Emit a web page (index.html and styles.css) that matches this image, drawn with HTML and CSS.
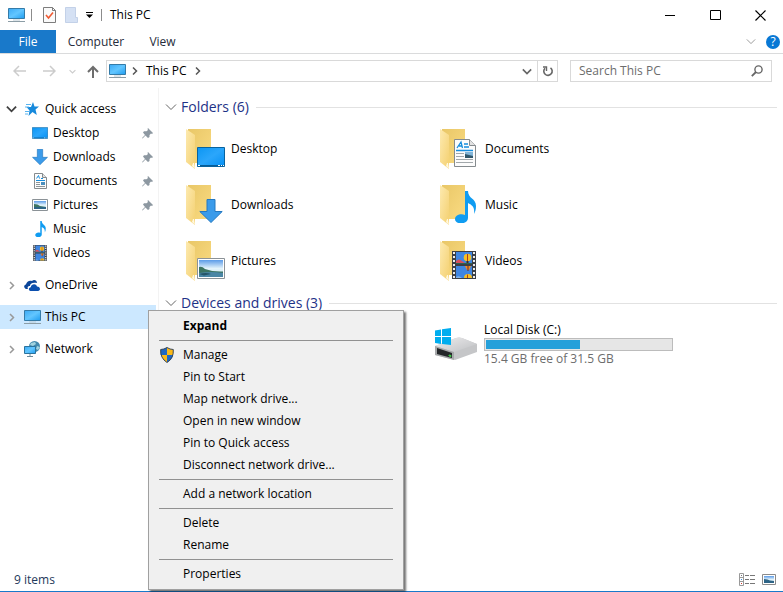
FILE: index.html
```html
<!DOCTYPE html>
<html lang="en">
<head>
<meta charset="utf-8">
<title>This PC</title>
<link rel="stylesheet" href="styles.css">
</head>
<body>
<svg class="defs" aria-hidden="true">
  <defs>
    <linearGradient id="sky" x1="0" y1="0" x2="1" y2="1"><stop offset="0" stop-color="#3aa9f5"/><stop offset=".5" stop-color="#62c6ff"/><stop offset="1" stop-color="#1e9cf0"/></linearGradient>
    <linearGradient id="desk" x1="0" y1="0" x2="1" y2="1"><stop offset="0" stop-color="#0c96f3"/><stop offset=".5" stop-color="#2ba6fb"/><stop offset="1" stop-color="#0590f4"/></linearGradient>
    <linearGradient id="back" x1="0" y1="0" x2="1" y2="1"><stop offset="0" stop-color="#e9c767"/><stop offset="1" stop-color="#fadb82"/></linearGradient>
    <linearGradient id="flap" x1="0" y1="0" x2="1" y2="1"><stop offset="0" stop-color="#fdeab0"/><stop offset="1" stop-color="#f4d070"/></linearGradient>
    <linearGradient id="view" x1="0" y1="0" x2="0" y2="1"><stop offset="0" stop-color="#5b9be8"/><stop offset=".5" stop-color="#e3f3fb"/><stop offset="1" stop-color="#c2dfe9"/></linearGradient>
    <linearGradient id="metal" x1="0" y1="0" x2="1" y2="1"><stop offset="0" stop-color="#ededee"/><stop offset="1" stop-color="#bfc0c3"/></linearGradient>
    <symbol id="monitor" viewBox="0 0 17 16"><path d="M.5 1.5h16v10H.5z" fill="url(#sky)" stroke="#347ba8"/><path d="M5 13h7" stroke="#b9cad3"/><path d="M0 14.500h17" stroke="#8c9da6"/></symbol>
    <symbol id="desktop" viewBox="0 0 28 20"><path d="M.5.5h27v19H.5z" fill="url(#desk)" stroke="#08639f"/><path d="M1 18.5h26" stroke="#075c97"/><path d="M1 18.5h2M21 18.5h2m1 0h1m1 0h1" stroke="#fff"/></symbol>
    <symbol id="down" viewBox="0 0 24 24"><path d="M8 .5h8v12h7.2L12 23.5.8 12.500H8z" fill="#3b9bea" stroke="#2478c0"/></symbol>
    <symbol id="document" viewBox="0 0 22 28"><path d="M.5.5h15l6 6v21H.5z" fill="#fcfcfc" stroke="#858b8e"/><path d="M15.500.5v6h6" fill="#e2e2e2" stroke="#858b8e"/><path d="M3 9l4-6 1.500 6M5 7h3M10 5h4M10 8h5M2 11.500h17" fill="none" stroke="#158ddd" stroke-width="1.300"/><path d="M2 14.500h8M2 17.500h8M2 20.500h17M2 23.500h17" stroke="#a2a8ab"/><path d="M11 13h8v6h-8z" fill="#82b5d8"/><path d="M11 15l8 2v2h-8z" fill="#31576b"/></symbol>
    <symbol id="document-small" viewBox="0 0 13 16"><path d="M.5.5h8l4 4v11H.5z" fill="#fcfcfc" stroke="#858b8e"/><path d="M8.500.5v4h4" fill="#e2e2e2" stroke="#858b8e"/><path d="M2.500 5.500L4.500 2.500l1 3M2 7.500h9M7 5.500h2" fill="none" stroke="#158ddd"/><path d="M2 9.500h4M2 11.500h4M2 13.500h9" stroke="#8d9599"/><path d="M7 9h4v3H7z" fill="#4b8fbd"/></symbol>
    <symbol id="picture" viewBox="0 0 28 21"><path d="M.5.5h27v20H.5z" fill="#fff" stroke="#8b9297"/><path d="M2 2h24v17H2z" fill="url(#view)"/><path d="M2 9q3-1 6 2 8 3 18 2.500v1.500H2z" fill="#3d7462"/><path d="M2 15q12-2 24 0v4H2z" fill="#4a86a5"/><path d="M2 16q7-2 12 0l-7 1.500z" fill="#255568"/></symbol>
    <symbol id="picture-small" viewBox="0 0 16 12"><path d="M.5.5h15v11H.5z" fill="#fff" stroke="#8b9297"/><path d="M2 2h12v8H2z" fill="url(#view)"/><path d="M2 5q4 0 6 2l6 1v1H2z" fill="#3d7462"/><path d="M2 8h12v2H2z" fill="#2d6486"/></symbol>
    <symbol id="note" viewBox="0 0 21 32"><path d="M10 0h3c0 8 8 7 8 15 0 4-1 6-2 8 1-7-2-9-6-11v15c0 7-13 7-13 1 0-4 6-6 10-4z" fill="#109cf1"/></symbol>
    <symbol id="film" viewBox="0 0 24 28"><path d="M0 0h24v28H0z" fill="#3b3f45"/><path d="M4 1h16v12H4zM4 15h16v12H4z" fill="#3f86e2"/><path d="M2 1v27M22 1v27" stroke="#eee" stroke-width="2" stroke-dasharray="2 2"/><path d="M4 10q3-3 6 0l3 2H4z" fill="#d8505c"/><path d="M4 12h16v1H4z" fill="#2d6450"/><circle cx="15.500" cy="6.500" r="3.800" fill="#f7c022"/><path d="M15.500 3v7" stroke="#a93a22"/><path d="M14.500 10h2v2h-2z" fill="#442b20"/><path d="M13 15h6l-2 4h-2z" fill="#f08a25"/><path d="M16 15v5" stroke="#6d2a28"/><path d="M12 27q0-4 4-4t4 4z" fill="#f7c022"/><path d="M15.500 23.500V27" stroke="#a93a22"/><path d="M4 26q3-2 6 1H4z" fill="#7fb3ee"/></symbol>
    <symbol id="folder" viewBox="0 0 26 41"><path d="M2 0h23v34H2z" fill="url(#back)"/><path d="M0 0l9 6v34L0 33z" fill="url(#flap)"/><path d="M7 34h1l1 6-3-3z" fill="#fff8df"/></symbol>
    <symbol id="pin" viewBox="0 0 11 11"><path d="M6 0l5 5-1 1-1-.5L7.500 7v2L6 10 3.500 7.500.5 10.500 0 10l3-3L1 4.500 2 3.200l2.500.1L6 2l-.5-1z" fill="#8d98a1"/></symbol>
    <symbol id="right" viewBox="0 0 6 8"><path d="M1 .5L4.500 4 1 7.500" fill="none" stroke="currentColor" stroke-width="1.500"/></symbol>
    <symbol id="chevron" viewBox="0 0 12 8"><path d="M1 1.500l5 5 5-5" fill="none" stroke="currentColor" stroke-width="var(--w,1)"/></symbol>
    <symbol id="arrow" viewBox="0 0 13 12"><path d="M0 6h12M7 1l5 5-5 5" fill="none" stroke="currentColor" stroke-width="1.500"/></symbol>
  </defs>
</svg>

<div class="window">
  <header class="titlebar">
    <svg class="i-monitor"><use href="#monitor"/></svg>
    <span class="divider"></span>
    <button class="quick" aria-label="Item properties"><svg width="13" height="16"><path d="M.5.500h9l3 3v12H.5z" fill="#fafafa" stroke="#7d7d7d"/><path d="M9.500.5v3h3" fill="none" stroke="#7d7d7d"/><path d="M3 8l2.500 3L10 5.500" fill="none" stroke="#ef5a33" stroke-width="1.600"/></svg></button>
    <button class="quick" aria-label="New folder"><svg width="13" height="16"><path d="M.5.5h10v10h2v5H.5z" fill="#d5e1f4" stroke="#c3d1e8"/></svg></button>
    <button class="quick" aria-label="Customize toolbar"><svg width="7" height="6"><path d="M0 .5h7" stroke="#000"/><path d="M0 2.500h7L3.500 6z"/></svg></button>
    <span class="divider"></span>
    <h1>This PC</h1>
    <div class="controls">
      <button aria-label="Minimize"><svg width="11" height="11"><path d="M0 5.500h10" stroke="#000"/></svg></button>
      <button aria-label="Maximize"><svg width="11" height="11"><path d="M.5.5h10v9H.5z" fill="none" stroke="#000"/></svg></button>
      <button aria-label="Close"><svg width="11" height="11"><path d="M.5.5l10 10m0-10l-10 10" stroke="#000" stroke-width="1.200"/></svg></button>
    </div>
  </header>

  <nav class="ribbon" aria-label="Ribbon">
    <button class="file">File</button>
    <button>Computer</button>
    <button>View</button>
    <div class="ribbon-end">
      <button class="collapse" aria-label="Expand ribbon"><svg width="10" height="7"><use href="#chevron"/></svg></button>
      <button class="help" aria-label="Help">?</button>
    </div>
  </nav>

  <div class="toolbar">
    <button class="dim" aria-label="Back"><svg class="flip" width="13" height="12"><use href="#arrow"/></svg></button>
    <button class="dim forward" aria-label="Forward"><svg width="13" height="12"><use href="#arrow"/></svg></button>
    <button class="dim recent" aria-label="Recent locations"><svg class="thick" width="7" height="5"><use href="#chevron"/></svg></button>
    <button class="up" aria-label="Up"><svg width="12" height="13"><path d="M6 13V2M1 7l5-5 5 5" fill="none" stroke="#6d6d6d" stroke-width="2"/></svg></button>
    <div class="address">
      <svg class="i-monitor"><use href="#monitor"/></svg>
      <svg class="crumb" width="6" height="8"><use href="#right"/></svg>
      <a href="#thispc">This PC</a>
      <svg class="crumb" width="6" height="8"><use href="#right"/></svg>
      <button class="history" aria-label="Previous locations"><svg class="thick" width="10" height="7"><use href="#chevron"/></svg></button>
      <button class="refresh" aria-label="Refresh"><svg width="12" height="12"><path d="M8.500 2.800A4.200 4.200 0 1 1 3 3.200" fill="none" stroke="#666" stroke-width="1.600"/><path d="M1 2h3.500v4" fill="none" stroke="#666" stroke-width="1.400"/></svg></button>
    </div>
    <label class="search">
      <input type="text" placeholder="Search This PC" aria-label="Search This PC">
      <svg width="12" height="12"><circle cx="7.500" cy="4.500" r="3.600" fill="none" stroke="#666" stroke-width="1.400"/><path d="M5 7L.8 11.200" stroke="#666" stroke-width="1.800"/></svg>
    </label>
  </div>

  <main class="body">
    <nav class="tree" aria-label="Folders">
      <section>
        <a class="node" href="#quick"><span class="twist open"><svg class="thick" width="11" height="8"><use href="#chevron"/></svg></span><span class="icon"><svg width="14" height="14"><path d="M8 0l1.500 4.500H14l-3.500 3 1.300 5.500L7.500 10 3.500 14l1-5.500L1.500 5H6z" fill="#1689dc"/><path d="M1 2.500h5M0 5h4M0 9.500h4M0 12h3" stroke="#58b4ef"/></svg></span>Quick access</a>
        <a class="node sub" href="#desktop-folder"><span class="icon"><svg width="16" height="12"><use href="#desktop"/></svg></span>Desktop<svg class="pin"><use href="#pin"/></svg></a>
        <a class="node sub" href="#downloads"><span class="icon"><svg width="16" height="16"><use href="#down"/></svg></span>Downloads<svg class="pin"><use href="#pin"/></svg></a>
        <a class="node sub" href="#documents"><span class="icon"><svg width="13" height="16"><use href="#document-small"/></svg></span>Documents<svg class="pin"><use href="#pin"/></svg></a>
        <a class="node sub" href="#pictures"><span class="icon"><svg width="16" height="12"><use href="#picture-small"/></svg></span>Pictures<svg class="pin"><use href="#pin"/></svg></a>
        <a class="node sub" href="#music"><span class="icon"><svg width="11" height="16"><use href="#note"/></svg></span>Music</a>
        <a class="node sub" href="#videos"><span class="icon"><svg width="14" height="16"><use href="#film"/></svg></span>Videos</a>
      </section>
      <a class="node" href="#onedrive"><span class="twist"><svg width="6" height="9"><use href="#right"/></svg></span><span class="icon"><svg width="16" height="11"><path d="M4 9H2C-.5 8-.4 5 2 4.500 2.500 1 6 0 8 1c2-2 5-.5 5 2-5-1-7 1-7 3-2 0-3 1-2 3z" fill="#0b4599"/><path d="M6.500 11c-2.500-.5-2-3.500.3-3.700C7 4 12 3 13 6.500c3.500.2 4 4 1 4.500z" fill="#0b4fae"/></svg></span>OneDrive</a>
      <a class="node selected" id="thispc" href="#thispc"><span class="twist"><svg width="6" height="9"><use href="#right"/></svg></span><span class="icon"><svg class="i-monitor"><use href="#monitor"/></svg></span>This PC</a>
      <a class="node" href="#network"><span class="twist"><svg width="6" height="9"><use href="#right"/></svg></span><span class="icon"><svg width="16" height="16"><circle cx="10.500" cy="5.500" r="5.500" fill="#4289ad"/><path d="M7 2l4-1 1 2-3 2-3-1zM13 5l3 1-2 3-2-1z" fill="#a2d3df"/><path d="M.5 5.500h11v7H.5z" fill="url(#sky)" stroke="#2b739d"/><path d="M6 13v2M3 15.500h6" stroke="#6e8b99"/></svg></span>Network</a>
    </nav>

    <div class="content">
      <h2><svg width="12" height="8"><use href="#chevron"/></svg>Folders (6)</h2>
      <div class="tiles">
        <a class="tile" href="#desktop-folder"><span class="art"><svg class="folder"><use href="#folder"/></svg><svg class="badge" width="28" height="20"><use href="#desktop"/></svg></span>Desktop</a>
        <a class="tile" href="#documents"><span class="art"><svg class="folder"><use href="#folder"/></svg><svg class="badge doc" width="22" height="28"><use href="#document"/></svg></span>Documents</a>
        <a class="tile" href="#downloads"><span class="art"><svg class="folder"><use href="#folder"/></svg><svg class="badge arrow" width="24" height="24"><use href="#down"/></svg></span>Downloads</a>
        <a class="tile" href="#music"><span class="art"><svg class="folder"><use href="#folder"/></svg><svg class="badge doc" width="21" height="32"><use href="#note"/></svg></span>Music</a>
        <a class="tile" href="#pictures"><span class="art"><svg class="folder"><use href="#folder"/></svg><svg class="badge" width="28" height="21"><use href="#picture"/></svg></span>Pictures</a>
        <a class="tile" href="#videos"><span class="art"><svg class="folder"><use href="#folder"/></svg><svg class="badge doc" width="24" height="28"><use href="#film"/></svg></span>Videos</a>
      </div>
      <h2><svg width="12" height="8"><use href="#chevron"/></svg>Devices and drives (3)</h2>
      <div class="tiles">
        <a class="drive" href="#c">
          <svg width="43" height="33"><path d="M0 18l21-8q3-1 6 0l15 6v8L20 32 0 27z" fill="#c5c6c8"/><path d="M0 18l21-8q3-1 6 0l15 6-23 8z" fill="url(#metal)"/><path d="M0 18l19 6v8L0 27z" fill="#a6a8aa"/><path d="M2 20l15 5v5L2 26z" fill="#242729"/><path d="M14 27l2 .5v1l-2-.5z" stroke="#42d84b"/><path d="M0 2.500l6-1V8H0zM7 1.300L16 0v8H7zM0 9h6v7l-6-1zM7 9h9v8l-9-1z" fill="#00adef"/></svg>
          <span class="disk">Local Disk (C:)
            <span class="bar"><span class="used" style="width:51%"></span></span>
            <span class="free">15.4 GB free of 31.5 GB</span>
          </span>
        </a>
      </div>
    </div>
  </main>

  <footer class="status">
    <span>9 items</span>
    <div class="modes">
      <button aria-label="Details view"><svg width="16" height="13"><path d="M.5.5h4v12h-4zM.5 4.500h4m-4 4h4" fill="#fff" stroke="#999"/><path d="M2 2.500h1" stroke="#777"/><path d="M2 6.500h1" stroke="#398fe0"/><path d="M2 10.500h1" stroke="#d43c2c"/><path d="M6 2.500h4m1 0h5M6 6.500h4m1 0h5M6 10.500h4m1 0h5" stroke="#777"/></svg></button>
      <button aria-label="Large icons view"><svg width="14" height="11"><path d="M.5.5h13v10H.5z" fill="#fff" stroke="#8b8b8b"/><path d="M2 2h10v7H2z" fill="url(#view)"/><path d="M2 5q4 0 6 1.500l4 .5v2H2z" fill="#2d6486"/></svg></button>
    </div>
  </footer>

  <div class="menu" role="menu">
    <button role="menuitem" class="default">Expand</button>
    <hr>
    <button role="menuitem"><svg class="shield" width="14" height="16"><path d="M7 .5Q4 2.500.7 2.500 0 11 7 15.500 14 11 13.300 2.500 10 2.500 7 .5z" fill="#fbb917"/><path d="M7 .5Q4 2.500.7 2.500L.6 8H7zM7 8h6.200q-1 5-6.200 7.500z" fill="#1d68c4"/><path d="M7 .5Q4 2.500.7 2.500 0 11 7 15.500 14 11 13.300 2.500 10 2.500 7 .5z" fill="none" stroke="#37475c"/></svg>Manage</button>
    <button role="menuitem">Pin to Start</button>
    <button role="menuitem">Map network drive...</button>
    <button role="menuitem">Open in new window</button>
    <button role="menuitem">Pin to Quick access</button>
    <button role="menuitem">Disconnect network drive...</button>
    <hr>
    <button role="menuitem">Add a network location</button>
    <hr>
    <button role="menuitem">Delete</button>
    <button role="menuitem">Rename</button>
    <hr>
    <button role="menuitem">Properties</button>
  </div>
</div>
</body>
</html>
```
FILE: styles.css
```css
* { box-sizing: border-box; }
body {
  margin: 0;
  background: #fff;
  color: #000;
  font: 12px/16px "Open Sans", "Noto Sans", sans-serif;
}
button {
  display: flex;
  align-items: center;
  justify-content: center;
  padding: 0;
  border: 0;
  background: none;
  color: inherit;
  font: inherit;
}
a { color: inherit; text-decoration: none; }
svg { display: block; flex: none; }
h1, h2 { margin: 0; font-weight: normal; }
.defs { position: absolute; width: 0; height: 0; }
.i-monitor { width: 17px; height: 16px; }
.thick { --w: 2; }
.window {
  position: relative;
  display: flex;
  flex-direction: column;
  min-height: 100vh;
  border-bottom: 1px solid #1979ca;
}

.titlebar { display: flex; align-items: center; height: 30px; padding-left: 8px; }
.titlebar h1 { font-size: 12px; margin-left: 8px; }
.divider { width: 1px; height: 12px; margin-left: 6px; background: #8c8c8c; }
.quick { margin-left: 9px; }
.divider + .quick { margin-left: 11px; }
.quick + .divider { margin-left: 8px; }
.quick:nth-of-type(3) { margin-left: 8px; }
.controls { display: flex; margin-left: auto; }
.controls button { width: 45px; height: 30px; }

.ribbon { display: flex; height: 24px; border-bottom: 1px solid #dadbdc; color: #262c3b; }
.ribbon > button { width: 53px; }
.ribbon > button:nth-child(2) { width: 80px; }
.ribbon > .file { width: 56px; background: #1979ca; color: #fff; }
.ribbon-end { display: flex; align-items: center; gap: 10px; margin-left: auto; padding-right: 3px; }
.collapse { color: #888; }
.help { width: 14px; height: 14px; border-radius: 50%; background: #0878d5; color: #fff; }

.toolbar { display: flex; align-items: center; height: 34px; padding: 0 11px 0 13px; }
.flip { transform: scaleX(-1); }
.dim { color: #ccc; }
.forward { margin-left: 17px; }
.recent { margin-left: 13px; }
.up { margin-left: 11px; }
.address {
  display: flex;
  flex: 1;
  align-items: center;
  height: 22px;
  margin: 0 12px 0 7px;
  padding-left: 2px;
  border: 1px solid #d9d9d9;
}
.crumb { margin: 0 8px 0 6px; color: #555; }
.address a { padding: 0 2px 0 0; }
.history { width: 20px; height: 20px; margin-left: auto; color: #666; }
.refresh { width: 20px; height: 20px; border-left: 1px solid #d9d9d9; }
.search {
  display: flex;
  align-items: center;
  width: 202px;
  height: 22px;
  padding: 0 8px;
  border: 1px solid #d9d9d9;
}
.search input { flex: 1; min-width: 0; padding: 0; border: 0; outline: 0; background: none; font: inherit; }
.search input::placeholder { color: #6d6d6d; opacity: 1; }

.body { display: flex; flex: 1; }
.tree { display: flex; flex-direction: column; gap: 8px; width: 159px; padding: 9px 2px 0 0; border-right: 1px solid #f3f3f3; }
.node { display: flex; align-items: center; height: 24px; }
.twist { display: flex; justify-content: center; width: 23px; color: #999; }
.open { color: #404040; }
.icon { display: flex; justify-content: center; width: 18px; margin-right: 4px; }
.sub { padding-left: 31px; }
.pin { width: 11px; height: 11px; margin: 0 3px 0 auto; }
.selected { background: #cce8ff; }

.content { flex: 1; padding: 5px 6px 0 6px; }
.content h2 { display: flex; align-items: center; gap: 4px; height: 28px; color: #1e3287; font-size: 14px; }
.content h2 svg { color: #666; }
.content h2::after { content: ""; flex: 1; height: 1px; margin-left: 3px; background: #e2e2e2; }
.tiles { display: grid; grid-template-columns: 254px 1fr; padding-left: 21px; }
.tile { display: flex; align-items: center; height: 56px; }
.art { position: relative; width: 40px; height: 41px; margin-right: 5px; }
.folder { width: 26px; height: 41px; }
.badge { position: absolute; right: 1px; bottom: 3px; }
.doc { right: 4px; }
.arrow { right: 3px; }
.drive { display: flex; grid-column: 2; align-items: center; gap: 6px; height: 54px; margin-left: -5px; }
.disk { display: flex; flex-direction: column; }
.bar { width: 189px; height: 13px; padding: 1px; border: 1px solid #bcbcbc; background: #e6e6e6; }
.used { display: block; height: 100%; background: #26a0da; }
.free { color: #6d6d6d; }

.status { display: flex; align-items: center; height: 23px; padding: 0 7px 0 14px; color: #1e395b; }
.modes { display: flex; gap: 7px; margin-left: auto; }

.menu {
  position: absolute;
  top: 310px;
  left: 148px;
  width: 256px;
  padding: 4px 0;
  border: 1px solid #a0a0a0;
  background: #f0f0f0;
  box-shadow: 2px 2px 2px rgba(0, 0, 0, .55);
}
.menu button { position: relative; justify-content: flex-start; width: 100%; height: 22px; padding-left: 34px; }
.menu .default { font-weight: bold; }
.menu hr { height: 1px; margin: 3px 10px; border: 0; background: #919191; }
.shield { position: absolute; left: 11px; }
```
